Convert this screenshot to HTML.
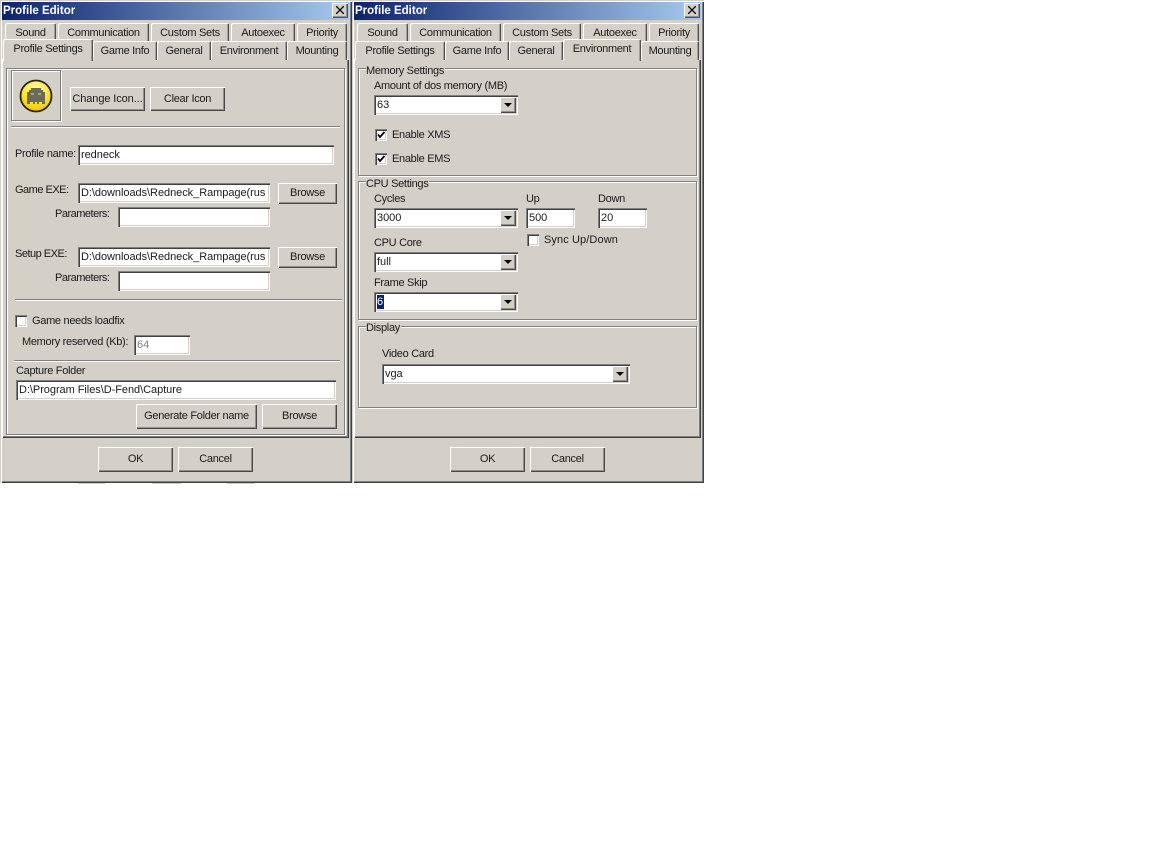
<!DOCTYPE html>
<html><head><meta charset="utf-8"><title>Profile Editor</title>
<style>
html,body{margin:0;padding:0;background:#fff;width:1152px;height:864px;overflow:hidden}
body{position:relative;font:11px/14px "Liberation Sans",sans-serif;letter-spacing:-.3px;color:#1a1a1a}
div,span{position:absolute;box-sizing:border-box;white-space:nowrap}
.w{top:0;width:352px;height:483px;background:#d4d0c8;box-shadow:inset 1px 1px 0 #d4d0c8,inset 2px 2px 0 #fff,inset -1px -1px 0 #404040,inset -2px -2px 0 #808080}
.title{left:2px;top:2px;width:347px;height:18px;background:linear-gradient(90deg,#0a246a,#a6caf0);color:#fff;font-weight:bold;font-size:11.5px;letter-spacing:0;line-height:19px;padding-left:1px}
.x{left:330px;top:1px;width:16px;height:15px;background:#d4d0c8;box-shadow:inset 1px 1px 0 #fff,inset -1px -1px 0 #505050,inset -2px -2px 0 #909090}
.x svg{position:absolute;left:4px;top:3px}
.panel{left:2px;top:59px;width:347px;height:379px;box-shadow:inset 1px 1px 0 #fff,inset -1px -1px 0 #404040,inset -2px -2px 0 #808080}
.tab{height:19px;background:#d4d0c8;border-radius:2px 2px 0 0;box-shadow:inset 1px 1px 0 #fff,inset -1px 0 0 #505050,inset -2px 0 0 #a0a0a0;text-align:center;line-height:20px}
.on{height:22px;line-height:20px;z-index:3}
.eh{background:#808080;height:1px;border-bottom:0;box-shadow:0 1px 0 #fff}
.g{border:1px solid #808080;box-shadow:1px 1px 0 #fff,inset 1px 1px 0 #fff}
.leg{background:#d4d0c8;padding:0 1px 0 0;height:13px;line-height:15px}
.b{background:#d4d0c8;text-align:center;box-shadow:inset 1px 1px 0 #fff,inset -1px -1px 0 #484848,inset -2px -2px 0 #909090}
.i{background:#fff;box-shadow:inset 1px 1px 0 #808080,inset 2px 2px 0 #404040,inset -1px -1px 0 #fff,inset -2px -2px 0 #d4d0c8;padding-left:3px;overflow:hidden;height:20px;line-height:20px;letter-spacing:-.05px}
.c{width:12px;height:12px;background:#fff;box-shadow:inset 1px 1px 0 #808080,inset 2px 2px 0 #404040,inset -1px -1px 0 #fff,inset -2px -2px 0 #d4d0c8}
.c svg{position:absolute;left:2px;top:2px}
.ar{right:2px;top:2px;width:16px;height:16px;background:#d4d0c8;box-shadow:inset 1px 1px 0 #fff,inset -1px -1px 0 #484848,inset -2px -2px 0 #909090}
.ar::after{content:"";position:absolute;left:4px;top:6px;border:4px solid transparent;border-top:4px solid #000;border-bottom:0}
</style></head><body>

<div class="w" style="left:0">
<div class="title">Profile Editor<div class="x"><svg width="8" height="8" viewBox="0 0 8 8"><path d="M0 0L8 8M8 0L0 8" stroke="#000" stroke-width="1.300"/></svg></div></div>
<div class="panel"></div>
<div class="tab" style="left:5px;top:23px;width:51px">Sound</div>
<div class="tab" style="left:58px;top:23px;width:91px">Communication</div>
<div class="tab" style="left:151px;top:23px;width:78px">Custom Sets</div>
<div class="tab" style="left:231px;top:23px;width:64px">Autoexec</div>
<div class="tab" style="left:297px;top:23px;width:50px">Priority</div>
<div class="tab on" style="left:3px;top:39px;width:90px">Profile Settings</div>
<div class="tab" style="left:93px;top:41px;width:64px">Game Info</div>
<div class="tab" style="left:157px;top:41px;width:54px">General</div>
<div class="tab" style="left:211px;top:41px;width:76px">Environment</div>
<div class="tab" style="left:287px;top:41px;width:60px">Mounting</div>
<div class="g" style="left:6px;top:68px;width:339px;height:367px"></div>
<div class="g" style="left:11px;top:70px;width:50px;height:51px"></div>
<svg style="position:absolute;left:18px;top:78px" width="36" height="36" viewBox="0 0 36 36"><defs><radialGradient id="y" cx="50%" cy="25%" r="75%"><stop offset="0" stop-color="#fff9a0"/><stop offset=".55" stop-color="#ffe83a"/><stop offset="1" stop-color="#eec400"/></radialGradient></defs><circle cx="18" cy="18" r="15.500" fill="url(#y)" stroke="#2a2410" stroke-width="1.800"/><path d="M13 10h10v2h2v2h2v12h-3v-2h-3v2h-2v-2h-2v2h-2v-2h-3v2H9V14h2v-2h2z" fill="#6c6a58"/><rect x="13" y="15" width="3" height="2" fill="#a8a46a"/><rect x="20" y="15" width="3" height="2" fill="#a8a46a"/></svg>
<div class="b" style="left:70px;top:87px;width:75px;height:24px;line-height:25px;letter-spacing:-.1px">Change Icon...</div>
<div class="b" style="left:150px;top:87px;width:75px;height:24px;line-height:25px">Clear Icon</div>
<div class="eh" style="left:11px;top:126px;width:329px"></div>
<span style="left:15px;top:147px">Profile name:</span>
<div class="i" style="left:78px;top:145px;width:256px">redneck</div>
<span style="left:15px;top:183px;letter-spacing:-.5px">Game EXE:</span>
<div class="i" style="left:78px;top:183px;width:192px">D:\downloads\Redneck_Rampage(rus</div>
<div class="b" style="left:278px;top:183px;width:59px;height:21px;line-height:20px">Browse</div>
<span style="left:55px;top:207px;letter-spacing:-.5px">Parameters:</span>
<div class="i" style="left:118px;top:207px;width:152px"></div>
<span style="left:15px;top:247px;letter-spacing:-.5px">Setup EXE:</span>
<div class="i" style="left:78px;top:247px;width:192px">D:\downloads\Redneck_Rampage(rus</div>
<div class="b" style="left:278px;top:247px;width:59px;height:21px;line-height:20px">Browse</div>
<span style="left:55px;top:271px;letter-spacing:-.5px">Parameters:</span>
<div class="i" style="left:118px;top:271px;width:152px"></div>
<div class="eh" style="left:15px;top:299px;width:327px"></div>
<div class="c" style="left:15px;top:315px"></div>
<span style="left:32px;top:314px">Game needs loadfix</span>
<span style="left:22px;top:335px">Memory reserved (Kb):</span>
<div class="i" style="left:134px;top:335px;width:56px;color:#808080">64</div>
<div class="eh" style="left:14px;top:360px;width:326px"></div>
<span style="left:16px;top:364px">Capture Folder</span>
<div class="i" style="left:16px;top:380px;width:320px">D:\Program Files\D-Fend\Capture</div>
<div class="b" style="left:136px;top:404px;width:121px;height:25px;line-height:24px">Generate Folder name</div>
<div class="b" style="left:262px;top:404px;width:75px;height:25px;line-height:24px">Browse</div>
<div class="b" style="left:98px;top:447px;width:75px;height:25px;line-height:24px">OK</div>
<div class="b" style="left:178px;top:447px;width:75px;height:25px;line-height:24px">Cancel</div>
</div>

<div class="w" style="left:352px">
<div class="title">Profile Editor<div class="x"><svg width="8" height="8" viewBox="0 0 8 8"><path d="M0 0L8 8M8 0L0 8" stroke="#000" stroke-width="1.300"/></svg></div></div>
<div class="panel"></div>
<div class="tab" style="left:5px;top:23px;width:51px">Sound</div>
<div class="tab" style="left:58px;top:23px;width:91px">Communication</div>
<div class="tab" style="left:151px;top:23px;width:78px">Custom Sets</div>
<div class="tab" style="left:231px;top:23px;width:64px">Autoexec</div>
<div class="tab" style="left:297px;top:23px;width:50px">Priority</div>
<div class="tab" style="left:3px;top:41px;width:90px">Profile Settings</div>
<div class="tab" style="left:93px;top:41px;width:64px">Game Info</div>
<div class="tab" style="left:157px;top:41px;width:54px">General</div>
<div class="tab on" style="left:211px;top:39px;width:78px">Environment</div>
<div class="tab" style="left:289px;top:41px;width:58px">Mounting</div>

<div class="g" style="left:6px;top:68px;width:339px;height:108px"></div>
<span class="leg" style="left:14px;top:64px">Memory Settings</span>
<span style="left:22px;top:79px">Amount of dos memory (MB)</span>
<div class="i" style="left:22px;top:95px;width:144px">63<div class="ar"></div></div>
<div class="c" style="left:23px;top:129px"><svg width="8" height="8" viewBox="0 0 8 8"><path d="M1 3.500L3 6L7.500 1" fill="none" stroke="#000" stroke-width="1.800"/></svg></div>
<span style="left:40px;top:128px">Enable XMS</span>
<div class="c" style="left:23px;top:153px"><svg width="8" height="8" viewBox="0 0 8 8"><path d="M1 3.500L3 6L7.500 1" fill="none" stroke="#000" stroke-width="1.800"/></svg></div>
<span style="left:40px;top:152px">Enable EMS</span>

<div class="g" style="left:6px;top:181px;width:339px;height:139px"></div>
<span class="leg" style="left:14px;top:177px">CPU Settings</span>
<span style="left:22px;top:192px">Cycles</span>
<div class="i" style="left:22px;top:208px;width:144px">3000<div class="ar"></div></div>
<span style="left:174px;top:192px">Up</span>
<div class="i" style="left:174px;top:208px;width:49px">500</div>
<span style="left:246px;top:192px">Down</span>
<div class="i" style="left:246px;top:208px;width:49px">20</div>
<div class="c" style="left:175px;top:234px"></div>
<span style="left:192px;top:233px;letter-spacing:.1px">Sync Up/Down</span>
<span style="left:22px;top:236px">CPU Core</span>
<div class="i" style="left:22px;top:252px;width:144px">full<div class="ar"></div></div>
<span style="left:22px;top:276px">Frame Skip</span>
<div class="i" style="left:22px;top:292px;width:144px"><span style="left:3px;top:3px;width:7px;height:14px;line-height:14px;background:#0a246a;color:#fff">6</span><div class="ar"></div></div>

<div class="g" style="left:6px;top:326px;width:339px;height:82px"></div>
<span class="leg" style="left:14px;top:321px">Display</span>
<span style="left:30px;top:347px">Video Card</span>
<div class="i" style="left:30px;top:364px;width:248px">vga<div class="ar"></div></div>

<div class="b" style="left:98px;top:447px;width:75px;height:25px;line-height:24px">OK</div>
<div class="b" style="left:178px;top:447px;width:75px;height:25px;line-height:24px">Cancel</div>
</div>

<div style="left:78px;top:483px;width:27px;height:1px;background:#cfcfcf"></div>
<div style="left:152px;top:483px;width:29px;height:1px;background:#cfcfcf"></div>
<div style="left:227px;top:483px;width:28px;height:1px;background:#cfcfcf"></div>
</body></html>
